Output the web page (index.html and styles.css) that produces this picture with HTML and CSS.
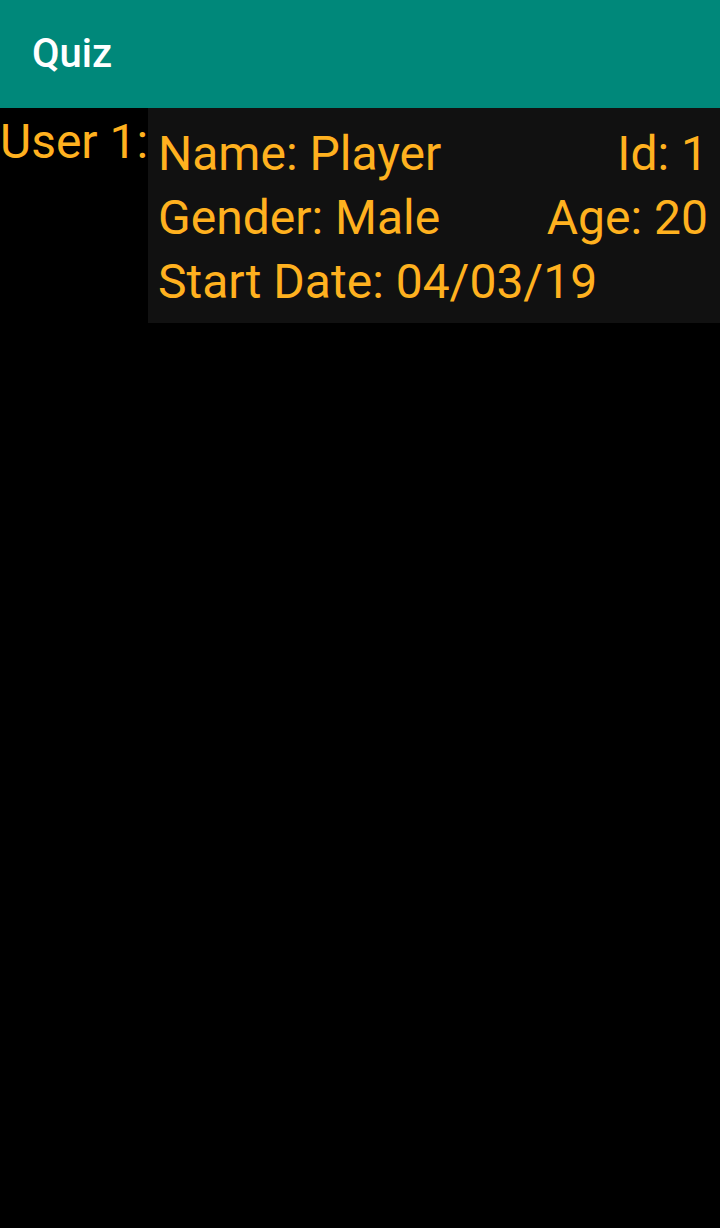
FILE: index.html
```html
<!DOCTYPE html>
<html>
<head>
<meta charset="utf-8">
<title>Quiz</title>
<link rel="stylesheet" href="styles.css">
</head>
<body>
<header class="appbar"><span class="title">Quiz</span></header>
<main class="content">
  <div class="user-label">User 1:</div>
  <div class="card">
    <div class="row"><span>Name: Player</span><span>Id: 1</span></div>
    <div class="row"><span>Gender: Male</span><span>Age: 20</span></div>
    <div class="row"><span>Start Date: 04/03/19</span></div>
  </div>
</main>
</body>
</html>
```
FILE: styles.css
```css
html, body {
  margin: 0;
  padding: 0;
  background: #000;
  font-family: Roboto, "Noto Sans", sans-serif;
}
body {
  width: 720px;
  height: 1228px;
  overflow: hidden;
}
.appbar {
  height: 108px;
  background: #00887a;
  display: flex;
  align-items: center;
  padding-left: 32px;
  box-sizing: border-box;
}
.title {
  color: #fff;
  font-size: 40px;
  font-weight: 500;
  line-height: 1;
}
.content {
  display: flex;
  align-items: flex-start;
}
.user-label {
  width: 148px;
  flex: none;
  color: #ffb11f;
  font-size: 48px;
  line-height: 56px;
  margin-top: 6px;
  white-space: nowrap;
  overflow: visible;
}
.card {
  flex: 1;
  background: #111111;
  padding: 14px 12px 9px 10px;
  color: #ffb11f;
  font-size: 48px;
  line-height: 64px;
}
.row {
  display: flex;
  justify-content: space-between;
  white-space: nowrap;
}
```
